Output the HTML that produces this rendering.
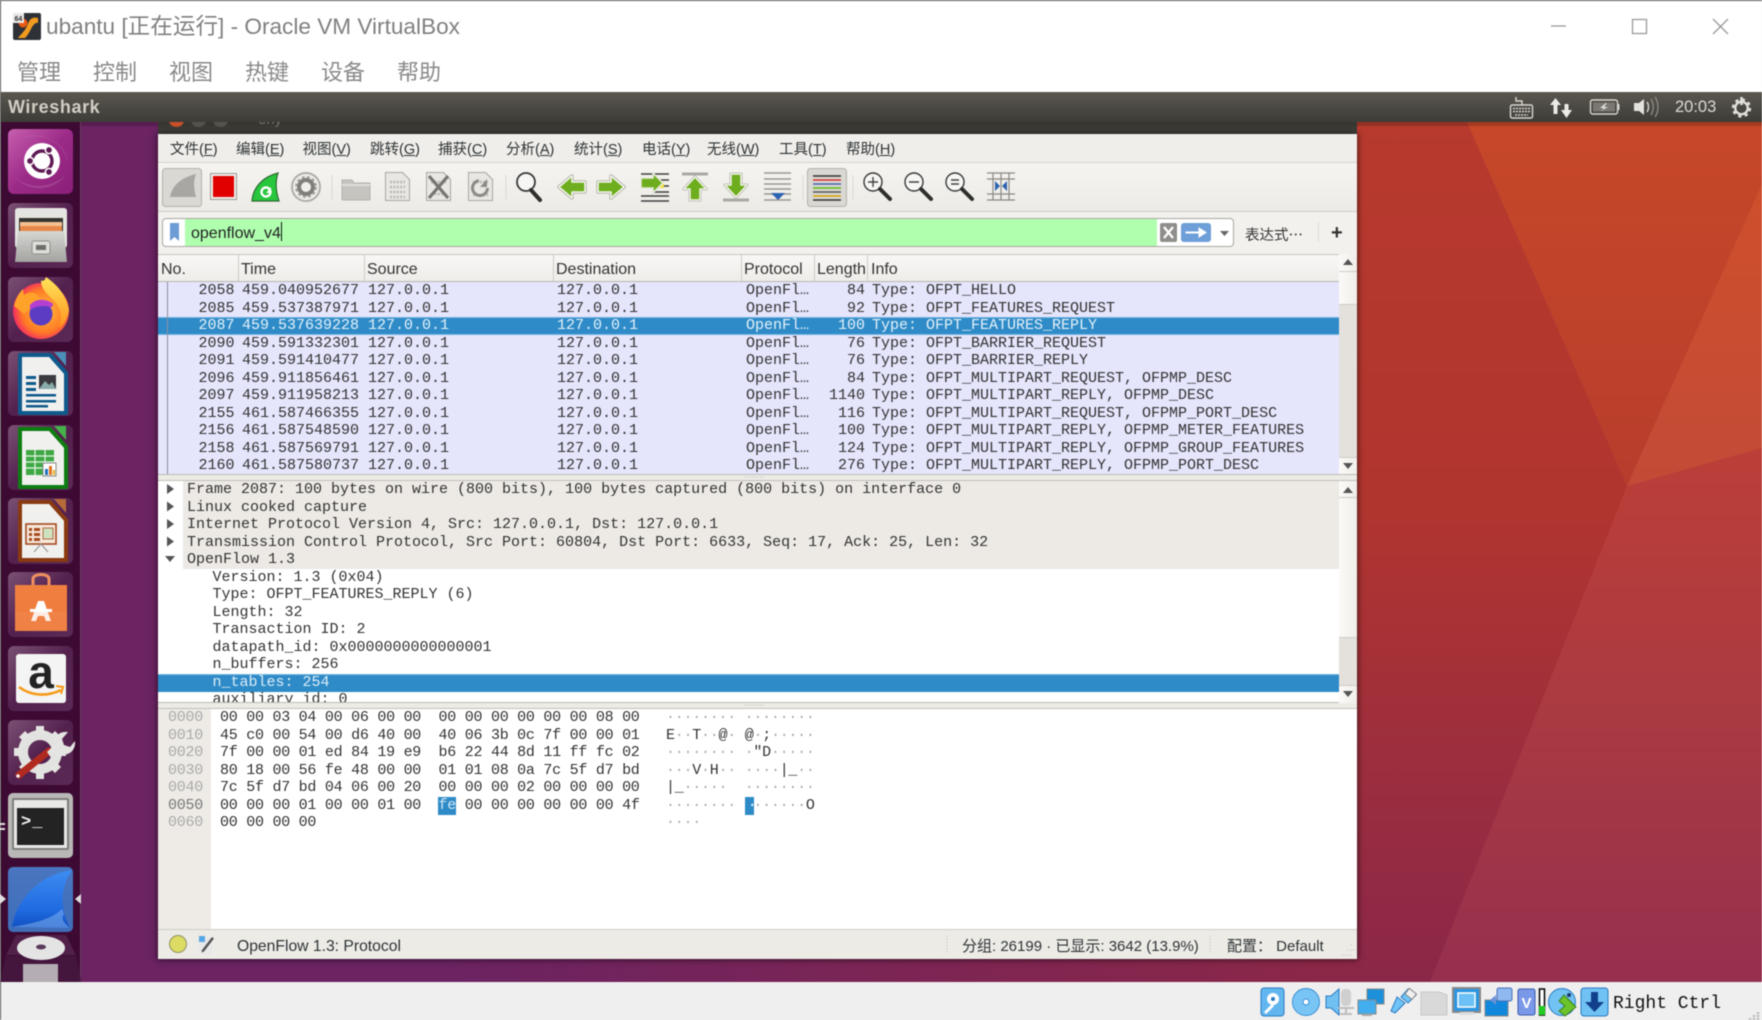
<!DOCTYPE html>
<html><head><meta charset="utf-8"><title>ubantu - Oracle VM VirtualBox</title>
<style>
html,body{margin:0;padding:0;background:#efefef}
#root{position:relative;width:1762px;height:1020px;overflow:hidden;background:#fff;font-family:"Liberation Sans","Noto Sans CJK SC",sans-serif;filter:blur(.5px)}
#root div,#root span.a{position:absolute}
.m{font-family:"Liberation Mono",monospace;font-size:15px;line-height:17px;white-space:pre;color:#333}
.tm{top:58px;font-size:22px;line-height:30px;color:#8a8a8a}
.wm{top:140px;font-size:14.5px;line-height:20px;color:#2e3436;white-space:nowrap}
.h{top:260px;font-size:16px;line-height:20px;color:#333;white-space:nowrap}
.cb{top:255px;width:1px;height:26px;background:#cfccc6}
.r{left:158px;width:1181px;height:17.5px;background:#e5e5fc}
.r.sel{background:#2f8bc7;box-shadow:inset 0 1px 0 #73b4de,inset 0 -1px 0 #73b4de}
.r.sel span{color:#e3f1fa}
.r span{position:absolute;top:.4px}
.n{right:1104.5px;text-align:right}.t{left:84px}.s{left:210px}.d{left:399px}.p{left:588px}.l{right:474px;text-align:right}.i{left:714px}
.f{left:158px;width:1181px;height:17.5px}
.f span{position:absolute;top:.4px;left:29px}
.f span.c{left:54.5px}
.x{left:168px;height:17.5px;width:560px}
.x span{position:absolute;top:.4px;letter-spacing:-.26px}
.x .o{left:0;color:#aaa}.x .g1{left:52px}.x .g2{left:270.5px}.x .g3{left:498px}
b.u{font-weight:normal;color:#aaa}
.sb{background:#e4e1dc;left:1339px;width:18px}
.sbt{background:linear-gradient(90deg,#fbfaf8,#f0eeea);left:1339px;width:18px;box-shadow:inset 0 -1px 0 #cfccc6}
</style></head><body><div id="root">

<!-- wallpaper -->
<svg style="position:absolute;left:0;top:122px" width="1762" height="860" viewBox="0 122 1762 860">
<defs>
<linearGradient id="wa" x1="0" y1="122" x2="0" y2="982" gradientUnits="userSpaceOnUse"><stop offset="0" stop-color="#b83a2e"/><stop offset=".45" stop-color="#b1352f"/><stop offset=".75" stop-color="#9c2e3e"/><stop offset="1" stop-color="#8b2749"/></linearGradient>
<linearGradient id="wl" x1="150" y1="0" x2="1320" y2="0" gradientUnits="userSpaceOnUse"><stop offset="0" stop-color="#6b2362"/><stop offset=".25" stop-color="#6b2362"/><stop offset="1" stop-color="#6b2362" stop-opacity="0"/></linearGradient>
<linearGradient id="wb" x1="0" y1="122" x2="0" y2="486" gradientUnits="userSpaceOnUse"><stop offset="0" stop-color="#c74829"/><stop offset="1" stop-color="#b83d2c"/></linearGradient>
<linearGradient id="wc" x1="0" y1="184" x2="0" y2="486" gradientUnits="userSpaceOnUse"><stop offset="0" stop-color="#cf4f2c"/><stop offset="1" stop-color="#c34b37"/></linearGradient>
<linearGradient id="wd" x1="0" y1="450" x2="0" y2="982" gradientUnits="userSpaceOnUse"><stop offset="0" stop-color="#bc3f38"/><stop offset=".5" stop-color="#aa3a42"/><stop offset="1" stop-color="#96304f"/></linearGradient>
<linearGradient id="tile" x1="0" y1="0" x2="1" y2="1"><stop offset="0" stop-color="#7a5175"/><stop offset=".5" stop-color="#54214e"/><stop offset="1" stop-color="#5b2a55"/></linearGradient>
<linearGradient id="utile" x1="0" y1="0" x2="1" y2="1"><stop offset="0" stop-color="#c75fae"/><stop offset=".5" stop-color="#9c2b88"/><stop offset="1" stop-color="#8a1f78"/></linearGradient>
<linearGradient id="drw" x1="0" y1="0" x2="0" y2="1"><stop offset="0" stop-color="#d6d6d3"/><stop offset="1" stop-color="#a3a3a0"/></linearGradient>
<radialGradient id="ffx" cx=".55" cy=".5" r=".62"><stop offset="0" stop-color="#ffc23a"/><stop offset=".62" stop-color="#ff7a26"/><stop offset=".85" stop-color="#f5365c"/><stop offset="1" stop-color="#e3187c"/></radialGradient>
<linearGradient id="ffy" x1="0" y1="0" x2="0" y2="1"><stop offset="0" stop-color="#ffe45a"/><stop offset="1" stop-color="#ff941e"/></linearGradient>
<linearGradient id="wst" x1="0" y1="0" x2="0" y2="1"><stop offset="0" stop-color="#4a76c0"/><stop offset="1" stop-color="#3f6db8"/></linearGradient>
<linearGradient id="fin" x1="0" y1="0" x2="0" y2="1"><stop offset="0" stop-color="#3d8cf2"/><stop offset=".7" stop-color="#1f6ae0"/><stop offset="1" stop-color="#0f4fc0"/></linearGradient>
<linearGradient id="shop" x1="0" y1="0" x2="0" y2="1"><stop offset="0" stop-color="#f08040"/><stop offset="1" stop-color="#ee7a3c"/></linearGradient>
</defs>
<rect x="0" y="122" width="1762" height="860" fill="url(#wa)"/>
<rect x="81" y="122" width="1300" height="860" fill="url(#wl)"/>
<polygon points="1467,122 1627,486 1762,184 1762,122" fill="url(#wb)"/>
<polygon points="1627,486 1762,184 1762,448" fill="url(#wc)"/>
<polygon points="1627,486 1762,448 1762,982 1430,982" fill="url(#wd)"/>
<rect x="0" y="122" width="1762" height="4" fill="#000" opacity=".18"/>
</svg>

<!-- VirtualBox chrome -->
<div style="left:0;top:0;width:1762px;height:92px;background:#fff;border-top:1px solid #555;box-sizing:border-box"></div>
<div style="left:46px;top:12px;font-size:22.6px;line-height:30px;color:#808080;white-space:nowrap">ubantu [正在运行] - Oracle VM VirtualBox</div>
<div class="tm" style="left:17px">管理</div><div class="tm" style="left:93px">控制</div><div class="tm" style="left:169px">视图</div><div class="tm" style="left:245px">热键</div><div class="tm" style="left:321px">设备</div><div class="tm" style="left:397px">帮助</div>

<!-- Panel -->
<div style="left:1px;top:92px;width:1761px;height:30px;background:linear-gradient(#5a574f,#3d3c37)"></div>
<div style="left:8px;top:96px;font-size:18px;font-weight:bold;line-height:22px;letter-spacing:.6px;color:#d2cec4">Wireshark</div>
<div style="left:1675px;top:97px;font-size:16.5px;line-height:20px;color:#dcdad6">20:03</div>

<!-- Launcher -->
<div style="left:1px;top:122px;width:80px;height:860px;background:#3d0a33;border-right:1px solid #6b3d66;box-sizing:border-box"></div>

<!-- WM title remnant (clipped by the panel) -->
<div style="left:158px;top:122px;width:1199px;height:12px;background:linear-gradient(#35342f,#45443f);overflow:hidden">
<div style="left:11px;top:-8px;width:15px;height:13px;border-radius:50%;background:#c8502a"></div>
<div style="left:33px;top:-8px;width:15px;height:13px;border-radius:50%;background:#55534d"></div>
<div style="left:55px;top:-8px;width:15px;height:13px;border-radius:50%;background:#55534d"></div>
<div style="left:100px;top:-11px;font-size:15px;line-height:17px;color:#77756e">eny</div>
</div>

<!-- Wireshark window -->
<div style="left:158px;top:134px;width:1199px;height:825px;background:#edebe6;box-shadow:0 0 6px 1px rgba(0,0,0,.55)"></div>
<div style="left:158px;top:134px;width:1199px;height:29px;background:#f0eeea;border-bottom:1px solid #d6d3cd;box-sizing:border-box"></div>
<div class="wm" style="left:170px">文件(<u>F</u>)</div><div class="wm" style="left:236px">编辑(<u>E</u>)</div><div class="wm" style="left:302.500px">视图(<u>V</u>)</div><div class="wm" style="left:370px">跳转(<u>G</u>)</div><div class="wm" style="left:438px">捕获(<u>C</u>)</div><div class="wm" style="left:506px">分析(<u>A</u>)</div><div class="wm" style="left:574px">统计(<u>S</u>)</div><div class="wm" style="left:642px">电话(<u>Y</u>)</div><div class="wm" style="left:707px">无线(<u>W</u>)</div><div class="wm" style="left:779px">工具(<u>T</u>)</div><div class="wm" style="left:846px">帮助(<u>H</u>)</div>
<div style="left:158px;top:163px;width:1199px;height:49px;background:linear-gradient(#f5f4f1,#ecebe6);border-bottom:1px solid #d0cdc7;box-sizing:border-box"></div>

<!-- filter -->
<div style="left:158px;top:212px;width:1199px;height:42px;background:#f3f1ed"></div>
<div style="left:162px;top:218px;width:1072px;height:29px;background:#fff;border:1px solid #a9a6a0;border-radius:4px;box-sizing:border-box"></div>
<div style="left:185px;top:219px;width:972px;height:27px;background:#afffaf"></div>
<div class="b" style="left:191px;top:224px;font-size:16px;line-height:20px;color:#222;white-space:nowrap">openflow_v4</div>
<div style="left:281px;top:222px;width:1px;height:19px;background:#111"></div>
<div style="left:1245px;top:225px;font-size:14.5px;line-height:20px;color:#333;white-space:nowrap">表达式<span style="font-family:'Noto Sans CJK SC',sans-serif">…</span></div>
<div style="left:1318px;top:222px;width:1px;height:20px;background:#dfdcd6"></div>
<div style="left:1331px;top:221px;font-size:20px;font-weight:bold;line-height:24px;color:#333">+</div>

<!-- header -->
<div style="left:158px;top:254px;width:1181px;height:28px;background:linear-gradient(#f8f7f5,#efedea);border-top:1px solid #c9c6c0;border-bottom:1px solid #b9b6b0;box-sizing:border-box"></div>
<div class="cb" style="left:238px"></div><div class="cb" style="left:364px"></div><div class="cb" style="left:553px"></div><div class="cb" style="left:741px"></div><div class="cb" style="left:814px"></div><div class="cb" style="left:867px"></div>
<div class="h" style="left:161px">No.</div><div class="h" style="left:241px">Time</div><div class="h" style="left:367px">Source</div><div class="h" style="left:556px">Destination</div><div class="h" style="left:744px">Protocol</div><div class="h" style="left:817px">Length</div><div class="h" style="left:871px">Info</div>

<!-- packets -->
<div class="r m" style="top:282px"><span class="n">2058</span><span class="t">459.040952677</span><span class="s">127.0.0.1</span><span class="d">127.0.0.1</span><span class="p">OpenFl…</span><span class="l">84</span><span class="i">Type: OFPT_HELLO</span></div>
<div class="r m" style="top:299.5px"><span class="n">2085</span><span class="t">459.537387971</span><span class="s">127.0.0.1</span><span class="d">127.0.0.1</span><span class="p">OpenFl…</span><span class="l">92</span><span class="i">Type: OFPT_FEATURES_REQUEST</span></div>
<div class="r m sel" style="top:317px"><span class="n">2087</span><span class="t">459.537639228</span><span class="s">127.0.0.1</span><span class="d">127.0.0.1</span><span class="p">OpenFl…</span><span class="l">100</span><span class="i">Type: OFPT_FEATURES_REPLY</span></div>
<div class="r m" style="top:334.5px"><span class="n">2090</span><span class="t">459.591332301</span><span class="s">127.0.0.1</span><span class="d">127.0.0.1</span><span class="p">OpenFl…</span><span class="l">76</span><span class="i">Type: OFPT_BARRIER_REQUEST</span></div>
<div class="r m" style="top:352px"><span class="n">2091</span><span class="t">459.591410477</span><span class="s">127.0.0.1</span><span class="d">127.0.0.1</span><span class="p">OpenFl…</span><span class="l">76</span><span class="i">Type: OFPT_BARRIER_REPLY</span></div>
<div class="r m" style="top:369.5px"><span class="n">2096</span><span class="t">459.911856461</span><span class="s">127.0.0.1</span><span class="d">127.0.0.1</span><span class="p">OpenFl…</span><span class="l">84</span><span class="i">Type: OFPT_MULTIPART_REQUEST, OFPMP_DESC</span></div>
<div class="r m" style="top:387px"><span class="n">2097</span><span class="t">459.911958213</span><span class="s">127.0.0.1</span><span class="d">127.0.0.1</span><span class="p">OpenFl…</span><span class="l">1140</span><span class="i">Type: OFPT_MULTIPART_REPLY, OFPMP_DESC</span></div>
<div class="r m" style="top:404.5px"><span class="n">2155</span><span class="t">461.587466355</span><span class="s">127.0.0.1</span><span class="d">127.0.0.1</span><span class="p">OpenFl…</span><span class="l">116</span><span class="i">Type: OFPT_MULTIPART_REQUEST, OFPMP_PORT_DESC</span></div>
<div class="r m" style="top:422px"><span class="n">2156</span><span class="t">461.587548590</span><span class="s">127.0.0.1</span><span class="d">127.0.0.1</span><span class="p">OpenFl…</span><span class="l">100</span><span class="i">Type: OFPT_MULTIPART_REPLY, OFPMP_METER_FEATURES</span></div>
<div class="r m" style="top:439.5px"><span class="n">2158</span><span class="t">461.587569791</span><span class="s">127.0.0.1</span><span class="d">127.0.0.1</span><span class="p">OpenFl…</span><span class="l">124</span><span class="i">Type: OFPT_MULTIPART_REPLY, OFPMP_GROUP_FEATURES</span></div>
<div class="r m" style="top:457px"><span class="n">2160</span><span class="t">461.587580737</span><span class="s">127.0.0.1</span><span class="d">127.0.0.1</span><span class="p">OpenFl…</span><span class="l">276</span><span class="i">Type: OFPT_MULTIPART_REPLY, OFPMP_PORT_DESC</span></div>
<div style="left:167px;top:282px;width:1px;height:193px;background:#8f8f9f"></div>
<div style="left:158px;top:474px;width:1199px;height:1px;background:#bdbab4"></div>
<div style="left:158px;top:480px;width:1199px;height:1px;background:#c2bfb9"></div>

<!-- details -->
<div style="left:158px;top:481px;width:1181px;height:222px;background:#fff;overflow:hidden">
<div style="left:25px;top:0;width:1156px;height:88px;background:#edeae5"></div>
<div style="left:0;top:193px;width:1181px;height:18px;background:#2f8bc7;box-shadow:inset 0 1px 0 #73b4de"></div>
<div class="f m" style="left:0;top:0"><span>Frame 2087: 100 bytes on wire (800 bits), 100 bytes captured (800 bits) on interface 0</span></div>
<div class="f m" style="left:0;top:17.5px"><span>Linux cooked capture</span></div>
<div class="f m" style="left:0;top:35px"><span>Internet Protocol Version 4, Src: 127.0.0.1, Dst: 127.0.0.1</span></div>
<div class="f m" style="left:0;top:52.5px"><span>Transmission Control Protocol, Src Port: 60804, Dst Port: 6633, Seq: 17, Ack: 25, Len: 32</span></div>
<div class="f m" style="left:0;top:70px"><span>OpenFlow 1.3</span></div>
<div class="f m" style="left:0;top:87.5px"><span class="c">Version: 1.3 (0x04)</span></div>
<div class="f m" style="left:0;top:105px"><span class="c">Type: OFPT_FEATURES_REPLY (6)</span></div>
<div class="f m" style="left:0;top:122.5px"><span class="c">Length: 32</span></div>
<div class="f m" style="left:0;top:140px"><span class="c">Transaction ID: 2</span></div>
<div class="f m" style="left:0;top:157.5px"><span class="c">datapath_id: 0x0000000000000001</span></div>
<div class="f m" style="left:0;top:175px"><span class="c">n_buffers: 256</span></div>
<div class="f m" style="left:0;top:192.5px"><span class="c" style="color:#dcedf8">n_tables: 254</span></div>
<div class="f m" style="left:0;top:210px"><span class="c">auxiliary_id: 0</span></div>
</div>
<div style="left:158px;top:702px;width:1199px;height:1px;background:#bdbab4"></div>
<div style="left:158px;top:708px;width:1199px;height:1px;background:#c2bfb9"></div>

<!-- scrollbars -->
<div class="sb" style="top:254px;height:220px"></div>
<div class="sbt" style="top:254px;height:18px"></div><div class="sbt" style="top:272px;height:33px"></div><div class="sbt" style="top:457px;height:17px;box-shadow:inset 0 1px 0 #cfccc6"></div>
<div class="sb" style="top:481px;height:222px"></div>
<div class="sbt" style="top:481px;height:17px"></div><div class="sbt" style="top:498px;height:140px"></div><div class="sbt" style="top:685px;height:18px;box-shadow:inset 0 1px 0 #cfccc6"></div>

<!-- hex -->
<div style="left:158px;top:709px;width:1199px;height:220px;background:#fff"></div>
<div style="left:158px;top:709px;width:53px;height:220px;background:#eeebe6"></div>
<div style="left:438px;top:797px;width:18px;height:18px;background:#2f8bc7"></div>
<div style="left:745px;top:797px;width:9px;height:18px;background:#2f8bc7"></div>
<div class="x m" style="top:709px"><span class="o">0000</span><span class="g1">00 00 03 04 00 06 00 00</span><span class="g2">00 00 00 00 00 00 08 00</span><span class="g3"><b class="u">········ ········</b></span></div>
<div class="x m" style="top:726.5px"><span class="o">0010</span><span class="g1">45 c0 00 54 00 d6 40 00</span><span class="g2">40 06 3b 0c 7f 00 00 01</span><span class="g3">E<b class="u">··</b>T<b class="u">··</b>@<b class="u">·</b> @<b class="u">·</b>;<b class="u">·····</b></span></div>
<div class="x m" style="top:744px"><span class="o">0020</span><span class="g1">7f 00 00 01 ed 84 19 e9</span><span class="g2">b6 22 44 8d 11 ff fc 02</span><span class="g3"><b class="u">········ ·</b>"D<b class="u">·····</b></span></div>
<div class="x m" style="top:761.5px"><span class="o">0030</span><span class="g1">80 18 00 56 fe 48 00 00</span><span class="g2">01 01 08 0a 7c 5f d7 bd</span><span class="g3"><b class="u">···</b>V<b class="u">·</b>H<b class="u">··</b> <b class="u">····</b>|_<b class="u">··</b></span></div>
<div class="x m" style="top:779px"><span class="o">0040</span><span class="g1">7c 5f d7 bd 04 06 00 20</span><span class="g2">00 00 00 02 00 00 00 00</span><span class="g3">|_<b class="u">·····</b>  <b class="u">········</b></span></div>
<div class="x m" style="top:796.5px"><span class="o" style="color:#777">0050</span><span class="g1">00 00 00 01 00 00 01 00</span><span class="g2"><i style="font-style:normal;color:#cfe6f6">fe</i> 00 00 00 00 00 00 4f</span><span class="g3"><b class="u">········ </b><i style="font-style:normal;color:#fff;position:relative;left:3px">·</i><b class="u">······</b>O</span></div>
<div class="x m" style="top:814px"><span class="o">0060</span><span class="g1">00 00 00 00</span><span class="g3"><b class="u">····</b></span></div>

<!-- status -->
<div style="left:158px;top:929px;width:1199px;height:30px;background:#edebe6;border-top:1px solid #cfccc6;box-sizing:border-box"></div>
<div style="left:237px;top:937px;font-size:15.7px;line-height:20px;color:#2e3436;white-space:nowrap">OpenFlow 1.3: Protocol</div>
<div style="left:962px;top:937px;font-size:15px;line-height:20px;color:#2e3436;white-space:nowrap">分组: 26199 · 已显示: 3642 (13.9%)</div>
<div style="left:1227px;top:937px;font-size:15px;line-height:20px;color:#2e3436;white-space:nowrap">配置： Default</div>

<!-- VBox status -->
<div style="left:0;top:982px;width:1762px;height:38px;background:#efefef"></div>
<div style="left:1613px;top:994px;font-family:'Liberation Mono',monospace;font-size:18px;line-height:21px;color:#111;white-space:nowrap">Right Ctrl</div>
<div style="left:0;top:0;width:1px;height:1020px;background:#555"></div>

<!-- icons overlay -->
<svg style="position:absolute;left:0;top:0" width="1762" height="1020" viewBox="0 0 1762 1020">
<!-- window controls -->
<g fill="none" stroke="#9a9a9a" stroke-width="1.3"><path d="M1551 26h15"/><rect x="1632.5" y="19.5" width="14" height="14"/><path d="M1713 19l15 15M1728 19l-15 15"/></g>
<!-- vbox logo -->
<rect x="13" y="13" width="28" height="27" rx="2" fill="#2e3138"/><path d="M38 18c-9-2-9 5-12 10s-5 6-8 10h7c3-3 5-7 7-11 2-3 4-5 6-4z" fill="#f29a1f"/><circle cx="23" cy="23" r="4.5" fill="#ea5a13"/><rect x="13" y="13" width="11" height="10" fill="#e8e8e8"/><text x="14.5" y="21" font-family="Liberation Sans" font-size="7" font-weight="bold" fill="#333">64</text>

<!-- panel icons -->
<g fill="none" stroke="#d8d5cd" stroke-width="1.4">
<rect x="1510.5" y="105" width="22" height="13" rx="1.5"/><path d="M1522 105v-4h-6v-4"/><path d="M1513 108.5h17M1513 111.5h17M1515 115h13" stroke-dasharray="2 1" stroke-width="1.6"/>
<rect x="1590.5" y="100" width="27" height="14" rx="2"/><path d="M1618.5 104v6" stroke-width="2"/>
<path d="M1651 99c3 5 3 11 0 16M1655 97c4 6 4 14 0 20" stroke="#8a8880"/><path d="M1647 102c2 3 2 7 0 10"/>
</g>
<rect x="1593" y="102.5" width="22" height="9" fill="#7a7871"/><path d="M1606 103l-6 5h4l-3 3 7-4h-4l3-4z" fill="#e8e6e0"/>
<path d="M1550 105l5.5-7 5.5 7h-3.5v9h-4v-9zM1561 110h3.5v-6h4v6h3.5l-5.500 8z" fill="#ecebe6"/>
<path d="M1634 103h5l5-4v16l-5-4h-5z" fill="#e4e2dc"/>
<g transform="translate(1741.500 108)" fill="none" stroke="#e2e0da"><circle r="8.500" stroke-width="2.400" stroke-dasharray="3.200 3.470"/><circle r="6.300" stroke-width="2.400"/><path d="M0-11v8" stroke-width="2.600"/></g>

<!-- launcher tiles -->
<rect x="8" y="129" width="65" height="65" rx="6" fill="url(#utile)"/>
<rect x="8" y="203" width="65" height="65" rx="6" fill="url(#tile)"/>
<rect x="8" y="277" width="65" height="65" rx="6" fill="url(#tile)"/>
<rect x="8" y="351" width="65" height="65" rx="6" fill="url(#tile)"/>
<rect x="8" y="425" width="65" height="65" rx="6" fill="url(#tile)"/>
<rect x="8" y="498" width="65" height="66" rx="6" fill="url(#tile)"/>
<rect x="8" y="572" width="65" height="65" rx="6" fill="url(#tile)"/>
<rect x="8" y="646" width="65" height="65" rx="6" fill="url(#tile)"/>
<rect x="8" y="720" width="65" height="65" rx="6" fill="url(#tile)"/>
<rect x="8" y="793" width="65" height="65" rx="5" fill="#b9b8b7"/>
<rect x="8" y="867" width="65" height="65" rx="5" fill="url(#wst)"/>

<!-- ubuntu -->
<path d="M10 170c10 18 35 22 55 6-10 14-40 20-55-6zM20 140c20-10 42 0 48 22-2-20-30-34-48-22z" fill="#fff" opacity=".14"/><circle cx="42" cy="161" r="18" fill="#fff"/><circle cx="42" cy="161" r="10" fill="none" stroke="#5f1a55" stroke-width="3.400"/><circle cx="49" cy="150" r="3.600" fill="#5f1a55" stroke="#fff" stroke-width="1.500"/><circle cx="49" cy="172" r="3.600" fill="#5f1a55" stroke="#fff" stroke-width="1.500"/><circle cx="30" cy="161" r="3.600" fill="#5f1a55" stroke="#fff" stroke-width="1.500"/>
<!-- files -->
<rect x="15" y="208" width="52" height="40" rx="3" fill="#e4e4e1"/><rect x="19" y="218" width="44" height="14" fill="#33322f"/><rect x="20" y="222" width="42" height="4" fill="#f4c090"/><rect x="20" y="226" width="42" height="5" fill="#e88848"/><path d="M18 231h46l3 31H15z" fill="url(#drw)"/><rect x="32" y="241" width="18" height="13" rx="2" fill="#dcdcd9" stroke="#8f8f8c"/><rect x="36" y="245" width="10" height="5" fill="#6e6e6b"/>
<!-- firefox -->
<circle cx="41" cy="311" r="28" fill="url(#ffx)"/><path d="M14 306c2-9 6-14 9-17l1 6c4-3 8-3 12-1l9 10-12 2-9 8z" fill="#ffa22a"/><path d="M41 281c0-1 3 2 5-4 7 5 20 15 23 33-1 8-5 14-10 18 4-10 2-22-8-30-5-5-10-10-10-17z" fill="url(#ffy)"/><circle cx="41" cy="314" r="11.500" fill="#5b3dc4"/><path d="M30 305c5-6 14-7 22-2 2 2 0 5-2 4-7-2-14-1-20 3z" fill="#b43fd0"/>
<!-- writer -->
<path d="M20 355h30l16 18v40H20z" fill="#f0f0ee" stroke="#0e5a8c" stroke-width="4" stroke-linejoin="round"/><path d="M54 352h12v14z" fill="#4a90b8"/><g fill="#0e5a8c"><rect x="26" y="376" width="10" height="3"/><rect x="26" y="382" width="10" height="3"/><rect x="26" y="388" width="10" height="3"/><rect x="26" y="394" width="30" height="2.5"/><rect x="26" y="400" width="30" height="2.5"/><rect x="26" y="405" width="22" height="2.5"/></g><rect x="39" y="375" width="17" height="14" fill="#3a3a40"/><path d="M39 389l6-8 4 4 3-3 4 7z" fill="#8aa"/>
<!-- calc -->
<path d="M20 429h30l16 18v40H20z" fill="#f0f0ee" stroke="#0d7d12" stroke-width="4" stroke-linejoin="round"/><path d="M54 426h12v14z" fill="#46b04a"/><rect x="26" y="450" width="28" height="25" fill="#3fa845"/><path d="M26 456h28M26 462h28M26 468h28M35 450v25M45 450v25" stroke="#e8f6e8" stroke-width="1.2"/><rect x="43" y="463" width="13" height="13" fill="#fff" stroke="#888"/><rect x="45" y="469" width="3" height="6" fill="#2070c0"/><rect x="49" y="466" width="3" height="9" fill="#e07020"/><rect x="53" y="470" width="2" height="5" fill="#e0b020"/>
<!-- impress -->
<path d="M20 502h30l16 18v40H20z" fill="#f0f0ee" stroke="#8a3a10" stroke-width="4" stroke-linejoin="round"/><path d="M54 499h12v14z" fill="#b66a3a"/><rect x="26" y="524" width="30" height="20" fill="#f6e8da" stroke="#a64a20" stroke-width="1.6"/><g fill="#a64a20"><rect x="29" y="528" width="3" height="3"/><rect x="34" y="528" width="6" height="3"/><rect x="29" y="533" width="3" height="3"/><rect x="34" y="533" width="6" height="3"/><rect x="29" y="538" width="3" height="3"/><rect x="34" y="538" width="6" height="3"/></g><rect x="43" y="528" width="10" height="11" fill="#cfe2c0" stroke="#a64a20" stroke-width=".8"/><path d="M34 552l7-8 7 8" fill="none" stroke="#999" stroke-width="1.2"/>
<!-- shop -->
<path d="M33 586v-7c0-6 16-6 16 0v7" fill="none" stroke="#f09060" stroke-width="3"/><rect x="15" y="585" width="52" height="46" fill="url(#shop)"/><path d="M38 601h6l7 20h-5l-2-5h-6l-2 5h-5z" fill="#fff"/><rect x="30" y="609" width="22" height="3" fill="#fff"/><rect x="15" y="612" width="52" height="19" fill="#f2a070" opacity=".18"/>
<!-- amazon -->
<rect x="16" y="654" width="50" height="49" rx="3" fill="#f4f4f4"/><text x="41" y="688" text-anchor="middle" font-family="Liberation Sans" font-size="46" font-weight="bold" fill="#232323">a</text><path d="M19 687c12 9 28 10 42 3" fill="none" stroke="#f59a17" stroke-width="2.6"/><path d="M56 686l7 1-2 7" fill="none" stroke="#f59a17" stroke-width="2"/>
<!-- settings -->
<g transform="translate(40 752)"><circle r="17" fill="none" stroke="#e2e2e0" stroke-width="10"/><path d="M-4-26h8v8h-8zM-4 18h8v9h-8zM-26-4h8v8h-8zM18-4h8v8h-8zM-21-15l6-6 6 6-6 6zM15-21l6 6-6 6-6-6zM-21 15l6 6 6-6-6-6zM21 15l-6 6-6-6 6-6z" fill="#e4e4e2"/></g><path d="M19 775l30-24" stroke="#b02a20" stroke-width="7" stroke-linecap="round"/><path d="M47 752l8-8c-2-7 4-13 13-12l-6 7 2 6 6 2 5-6c1 9-6 15-13 13l-8 8z" fill="#e4e4e2"/><circle cx="18" cy="776" r="1.800" fill="#eee"/>
<!-- terminal -->
<rect x="12" y="798" width="57" height="52" rx="2" fill="#7d7d7c"/><rect x="14" y="800" width="53" height="48" fill="#e8e8e6"/><rect x="17" y="808" width="47" height="37" fill="#232323"/>
<text x="21" y="826" font-family="Liberation Mono" font-size="17" font-weight="bold" fill="#f2f2f2" letter-spacing="1">&gt;_</text>
<!-- wireshark -->
<path d="M12 927C16 900 40 874 72 870 62 885 58 905 70 928z" fill="url(#fin)"/><path d="M12 927c16-3 38-6 50-18l2 5c-4 6 2 10 6 14z" fill="#7fb0ee" opacity=".55"/>
<!-- disc -->
<path d="M16 935h50l10 20H6z" fill="#5a2a55" opacity=".7"/><path d="M6 956h70l6 26H0z" fill="#4a1c45" opacity=".6"/><ellipse cx="41" cy="948" rx="24" ry="12" fill="#e4e4e4"/><ellipse cx="41" cy="947" rx="5" ry="2.500" fill="#5a3a5a"/><path d="M23 964h35v18H23z" fill="#c8c8c8" opacity=".85"/>
<path d="M0 823h5v2H0zM0 828h5v2H0z" fill="#ddd"/><path d="M0 894l6 5-6 5z" fill="#ddd"/><path d="M81 894l-6 5 6 5z" fill="#ddd"/>

<!-- toolbar -->
<rect x="162.5" y="168.5" width="39" height="38" rx="3" fill="#dad8d3" stroke="#b5b2ab"/>
<path d="M170 197c2-11 10-19 26-23-3 8-2 15 0 23z" fill="#a9a7a3"/>
<rect x="210.5" y="173.5" width="26" height="26" fill="#efeeea" stroke="#9c9a95"/><rect x="213" y="176" width="21" height="21" fill="#e00000"/>
<path d="M252 201c1-13 10-24 26-28-3 9-2 19 1 28z" fill="#27c63c" stroke="#2c6a30" stroke-width="1.2"/><circle cx="266" cy="192" r="4.5" fill="none" stroke="#fff" stroke-width="2.4"/><path d="M271 187v6h-5z" fill="#fff"/>
<circle cx="306" cy="187" r="14" fill="#f0efec" stroke="#b0aea8" stroke-width="2"/><circle cx="306" cy="187" r="7" fill="none" stroke="#807e79" stroke-width="4"/><circle cx="306" cy="187" r="10" fill="none" stroke="#a0a09a" stroke-width="2" stroke-dasharray="3 2.3"/>
<path d="M332 175v25M506 175v25M803 175v25M853 175v25" stroke="#dcd9d3"/>
<path d="M342 180v19c0 1 1 1 1 1h26c1 0 1 0 1-1v-16h-16l-2-3h-10z" fill="#c6c4bf" stroke="#b3b1ab"/><rect x="342" y="184" width="28" height="2" fill="#e0deda"/>
<g fill="#e9e7e3" stroke="#a8a6a0"><path d="M385.5 172.5h17l7 7v21h-24z"/><path d="M426.5 172.5h17l7 7v21h-24z"/><path d="M468.5 172.5h17l7 7v21h-24z"/></g>
<path d="M390 182h15M390 187h15M390 192h15M390 197h15M431 182h15M431 194h15M473 182h15M473 195h15" stroke="#b9b7b1" stroke-width="2.4" stroke-dasharray="2 1.4"/>
<path d="M429 176l19 22M448 176l-19 22" stroke="#77756f" stroke-width="3.200"/>
<circle cx="480" cy="188" r="7.5" fill="none" stroke="#8d8b86" stroke-width="3" stroke-dasharray="34 14"/><path d="M487 179v8h-7z" fill="#8d8b86"/>
<circle cx="526" cy="182" r="9" fill="#f6f6f4" stroke="#3a3a38" stroke-width="1.800"/><path d="M531 190l9 10" stroke="#2e2e2c" stroke-width="4" stroke-linecap="round"/>
<g fill="#6eae1e" stroke-linejoin="round"><path d="M559 187l13-11v6h13v10h-13v6z" stroke="#b5b6aa" stroke-width="3.500"/><path d="M559 187l13-11v6h13v10h-13v6z" stroke="#f2f3ea" stroke-width="1.600"/>
<path d="M624 187l-13-11v6h-13v10h13v6z" stroke="#b5b6aa" stroke-width="3.500"/><path d="M624 187l-13-11v6h-13v10h13v6z" stroke="#f2f3ea" stroke-width="1.600"/></g>
<path d="M641 174h28M654 180h15M654 186h15M654 192h15M641 196h28M641 201h28" stroke="#40403e" stroke-width="1.6"/><rect x="655" y="183" width="9" height="5" fill="#f2e040"/><path d="M663 183l-10-10v5h-12v10h12v5z" fill="#6eae1e" stroke="#e6e8da" stroke-width="1.600"/>
<path d="M682 174h26" stroke="#aaa8a2" stroke-width="3"/><path d="M695 177l-11 12h6v11h10v-11h6z" fill="#6eae1e" stroke="#b5b6aa" stroke-width="3" stroke-linejoin="round"/><path d="M695 177l-11 12h6v11h10v-11h6z" fill="#6eae1e" stroke="#f2f3ea" stroke-width="1.500" stroke-linejoin="round"/>
<path d="M723 200h26" stroke="#aaa8a2" stroke-width="3"/><path d="M736 197l-11-12h6v-11h10v11h6z" fill="#6eae1e" stroke="#b5b6aa" stroke-width="3" stroke-linejoin="round"/><path d="M736 197l-11-12h6v-11h10v11h6z" fill="#6eae1e" stroke="#f2f3ea" stroke-width="1.500" stroke-linejoin="round"/>
<path d="M764 173h27M764 179h27M764 184h27M764 189h27M764 194h27M764 200h27" stroke="#9a9893" stroke-width="1.4"/><path d="M771 193h14l-7 7z" fill="#2c62b0"/>
<rect x="807.5" y="168.5" width="39" height="38" rx="3" fill="#dad8d3" stroke="#b5b2ab"/>
<path d="M813 176h28" stroke="#333" stroke-width="1.4"/><path d="M813 180h28" stroke="#d83030" stroke-width="1.6"/><path d="M813 184h28" stroke="#4a60b0" stroke-width="1.6"/><path d="M813 188h28" stroke="#78c040" stroke-width="2"/><path d="M813 192h28" stroke="#555" stroke-width="1.4"/><path d="M813 196h28" stroke="#d8a820" stroke-width="1.8"/><path d="M813 200h28" stroke="#333" stroke-width="1.4"/>
<g fill="#f6f6f4" stroke="#3a3a38" stroke-width="1.4"><circle cx="873" cy="182" r="9"/><circle cx="914" cy="182" r="9"/><circle cx="955" cy="182" r="9"/></g>
<path d="M880 189l10 10M921 189l10 10M962 189l10 10" stroke="#2e2e2c" stroke-width="4" stroke-linecap="round"/>
<path d="M868 182h10M873 177v10M909 182h10M951 180h8M951 184h8" stroke="#444" stroke-width="1.4"/>
<path d="M987 173h28M987 200h28M993 173v27M1009 173v27M1001 173v27M987 179h28M987 194h28" stroke="#8b8985" stroke-width="1.2"/><path d="M1000 186l-5-5v10zM1002 186l5-5v10z" fill="#2c62b0"/>

<!-- filter icons -->
<path d="M170 223h9v18l-4.5-4-4.5 4z" fill="#6c9bd6"/>
<rect x="1160" y="223" width="17" height="19" rx="2" fill="#8f8e8a"/><path d="M1164 227l9 11M1173 227l-9 11" stroke="#fff" stroke-width="2.2"/>
<rect x="1181" y="223" width="30" height="19" rx="3" fill="#6f9fd8"/><path d="M1186 232h13v-4l7 4.500-7 4.500v-4h-13z" fill="#fff" stroke="#fff"/>
<path d="M1220 231h9l-4.500 5z" fill="#666"/>

<!-- tree arrows -->
<g fill="#555"><path d="M167 484l7 5-7 5zM167 501.500l7 5-7 5zM167 519l7 5-7 5zM167 536.500l7 5-7 5z"/><path d="M165 556l10 0-5 6z"/></g>
<!-- scroll arrows -->
<g fill="#555"><path d="M1343 265l5-6 5 6zM1343 463l5 6 5-6zM1343 493l5-6 5 6zM1343 691l5 6 5-6z"/></g>
<!-- splitter dots -->
<path d="M745 477h20M745 705h20" stroke="#bbb" stroke-width="1" stroke-dasharray="1 1.500"/>

<!-- status icons -->
<ellipse cx="178" cy="944" rx="8.500" ry="8.500" fill="#dcdc64" stroke="#8f8f60"/>
<rect x="199" y="938" width="13" height="16" fill="#e8e8e8"/><rect x="199" y="936" width="6" height="6" fill="#5aa7e8"/><path d="M202 950l10-13 2 1.500-10 13-2.500 1z" fill="#555"/>
<path d="M947 936v18M1210 936v18" stroke="#b9b6b0" stroke-dasharray="1 2"/><path d="M1342 955h12M1347 950h7M1351 945h3" stroke="#bbb" stroke-dasharray="1 2"/>

<!-- vbox status icons -->
<rect x="1261" y="988" width="23" height="28" rx="3" fill="#62b6ef" stroke="#2a7ac4"/><circle cx="1273" cy="999" r="6" fill="#fff"/><circle cx="1273" cy="999" r="2" fill="#2a7ac4"/><path d="M1265 1013l8-8" stroke="#fff" stroke-width="3"/>
<circle cx="1306" cy="1002" r="13.500" fill="#78c5f5" stroke="#3a8ed4"/><circle cx="1306" cy="1002" r="3" fill="#fff" stroke="#3a8ed4"/>
<path d="M1326 996h5l8-7v26l-8-7h-5z" fill="#70c0f2" stroke="#2a7ac4"/><rect x="1341" y="989" width="10" height="17" rx="4" fill="#cfcfcf"/><path d="M1338 1008h16M1346 1008v5M1340 1014h12" stroke="#bdbdbd" stroke-width="2"/>
<rect x="1367" y="989" width="17" height="15" fill="#1d90dc" stroke="#888"/><rect x="1358" y="1000" width="18" height="14" fill="#42aef0" stroke="#888"/><rect x="1362" y="1014" width="10" height="2" fill="#aaa"/>
<path d="M1391 1011l6-14 8 6-10 10zM1401 997l7-8 8 6-8 8z" fill="#70c4f5" stroke="#2a7ac4"/><rect x="1406" y="990" width="9" height="7" fill="#f0f0f0" stroke="#888" transform="rotate(38 1410 994)"/>
<path d="M1421 992h18l8 3v20h-26z" fill="#d9d9d9" stroke="#c8c8c8"/>
<rect x="1453" y="988" width="27" height="24" fill="#2c96e0" stroke="#8a8a8a" stroke-width="2"/><rect x="1458" y="993" width="17" height="14" fill="#6cc0f5" stroke="#fff" stroke-width="1.500"/><rect x="1460" y="1012" width="14" height="3" fill="#ddd"/>
<rect x="1485" y="1000" width="23" height="16" fill="#1288dc" stroke="#888"/><rect x="1497" y="988" width="15" height="13" rx="2" fill="#8fb8f0" stroke="#4a70b8"/><path d="M1490 1000l6-5v10z" fill="#6a90d8"/>
<rect x="1518" y="989" width="17" height="26" rx="2" fill="#7a98e8" stroke="#3a58b0"/><text x="1526.500" y="1008" text-anchor="middle" font-family="Liberation Sans" font-size="15" font-weight="bold" fill="#fff">V</text>
<rect x="1539.500" y="989" width="5" height="26" fill="#fff" stroke="#000" stroke-width="1.500"/><rect x="1539" y="1006" width="6" height="9" fill="#22cc22"/>
<circle cx="1562" cy="1002" r="13.500" fill="#72c3f3" stroke="#2a7ac4"/><path d="M1564 995l12 12-11 9-6-5 6-5-6-5z" fill="#6cc42a" stroke="#3a8020"/><circle cx="1569" cy="995" r="2" fill="#1a3a70"/>
<rect x="1581" y="988" width="27" height="28" rx="3" fill="#70c2f4" stroke="#2a7ac4"/><path d="M1591 992h7v10h6l-9.500 10-9.500-10h6z" fill="#12408c"/>
<path d="M1758 1012v2M1754 1015v2M1758 1015v2M1750 1018v2M1754 1018v2M1758 1018v2" stroke="#bbb" stroke-width="2.500"/>
</svg>
</div></body></html>
